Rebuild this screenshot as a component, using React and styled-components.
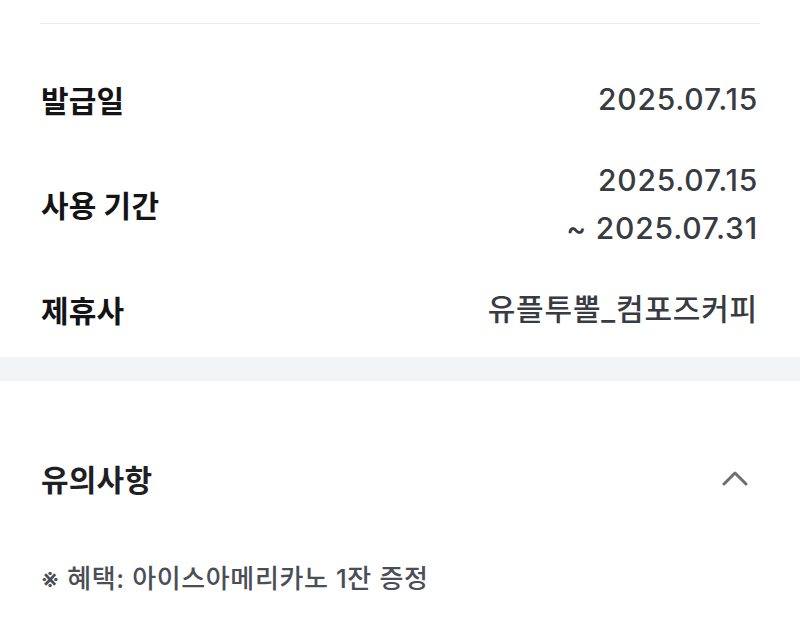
import React from "react";
import styled, { createGlobalStyle } from "styled-components";

const Global = createGlobalStyle`
  html, body { margin: 0; padding: 0; background: #ffffff; }
  body { font-family: "Inter", "Noto Sans CJK KR", sans-serif; -webkit-font-smoothing: antialiased; }
  * { box-sizing: border-box; }
`;

const Page = styled.div`
  width: 800px;
  height: 643px;
  overflow: hidden;
  background: #ffffff;
  display: flex;
  flex-direction: column;
`;

const TopEdge = styled.div`
  height: 24px;
  margin: 0 40px;
  border-bottom: 1px solid #ececee;
`;

const InfoList = styled.dl`
  margin: 0;
  padding: 51px 42px 24px 41px;
  display: flex;
  flex-direction: column;
  gap: 33px;
`;

const Row = styled.div`
  display: flex;
  align-items: center;
  justify-content: space-between;
`;

const Label = styled.dt`
  font-family: "Noto Sans CJK KR", sans-serif;
  font-size: 30px;
  font-weight: 700;
  line-height: 48px;
  color: #141416;
  letter-spacing: 0.2px;
`;

const Value = styled.dd`
  margin: 0;
  font-family: "Inter", "Noto Sans CJK KR", sans-serif;
  font-size: 30px;
  font-weight: 500;
  line-height: 48px;
  color: #383b41;
  text-align: right;
  letter-spacing: 0.8px;
  display: flex;
  flex-direction: column;
  align-items: flex-end;
`;

const Band = styled.div`
  height: 24px;
  background: #f3f4f6;
`;

const Notice = styled.section`
  padding: 77px 40px 0 41px;
  display: flex;
  flex-direction: column;
  gap: 63px;
`;

const NoticeHeader = styled.div`
  height: 40px;
  display: flex;
  align-items: center;
  justify-content: space-between;
`;

const NoticeTitle = styled.h3`
  margin: 0;
  font-family: "Noto Sans CJK KR", sans-serif;
  font-size: 30px;
  font-weight: 600;
  line-height: 40px;
  color: #1f2023;
  letter-spacing: 0.2px;
`;

const ToggleIcon = styled.svg`
  width: 26px;
  height: 16px;
  margin-right: 12px;
  display: block;
`;

const NoticeText = styled.p`
  margin: 0;
  font-family: "Inter", "Noto Sans CJK KR", sans-serif;
  font-size: 26px;
  font-weight: 500;
  line-height: 36px;
  color: #4a4e56;
  letter-spacing: 0.6px;
`;

const rows = [
  { label: "발급일", values: ["2025.07.15"] },
  { label: "사용 기간", values: ["2025.07.15", "~ 2025.07.31"] },
  { label: "제휴사", values: ["유플투뽈_컴포즈커피"] },
];

export default function App() {
  return (
    <>
      <Global />
      <Page>
        <TopEdge />
        <InfoList>
          {rows.map((r) => (
            <Row key={r.label}>
              <Label>{r.label}</Label>
              <Value>
                {r.values.map((v) => (
                  <span key={v}>{v}</span>
                ))}
              </Value>
            </Row>
          ))}
        </InfoList>
        <Band />
        <Notice>
          <NoticeHeader>
            <NoticeTitle>유의사항</NoticeTitle>
            <ToggleIcon viewBox="0 0 26 16" fill="none">
              <path
                d="M2 14 L13 3 L24 14"
                stroke="#6a6e76"
                strokeWidth="3"
                strokeLinecap="round"
                strokeLinejoin="round"
              />
            </ToggleIcon>
          </NoticeHeader>
          <NoticeText>※ 혜택: 아이스아메리카노 1잔 증정</NoticeText>
        </Notice>
      </Page>
    </>
  );
}
